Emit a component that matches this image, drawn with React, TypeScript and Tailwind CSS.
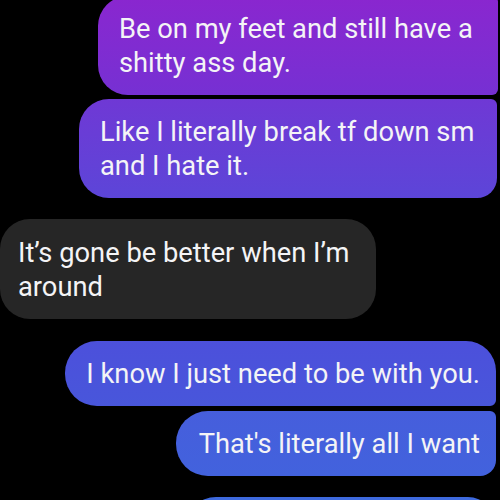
import React from "react";

export default function App() {
  const font = { fontFamily: "Roboto, 'Noto Sans', sans-serif" };
  return (
    <div
      className="w-[500px] h-[500px] overflow-hidden bg-black text-[#f4f4f6] text-[27.3px] leading-[34px]"
      style={font}
    >
      <div className="flex flex-col mt-[-4px]">
        <div className="self-end mr-[2px] w-[400px] rounded-l-[30px] rounded-tr-[6px] rounded-br-[6px] bg-gradient-to-b from-[#8a26cf] to-[#7630d3] pl-[21px] pr-[14px] pt-[15.5px] pb-[15px]">
          Be on my feet and still have a shitty ass day.
        </div>
        <div className="self-end mr-[3px] mt-[4.5px] w-[418px] rounded-l-[30px] rounded-tr-[6px] rounded-br-[20px] bg-gradient-to-b from-[#6f38d5] to-[#5c45d8] pl-[21px] pr-[12px] pt-[15.5px] pb-[15px]">
          Like I literally break tf down sm and I hate it.
        </div>
        <div className="self-start mt-[21.5px] w-[376px] rounded-[30px] bg-[#262626] pl-[18px] pr-[12px] pt-[17px] pb-[15px]">
          It’s gone be better when I’m around
        </div>
        <div className="self-end mr-[4px] mt-[22px] rounded-l-[32px] rounded-tr-[30px] rounded-br-[6px] bg-gradient-to-b from-[#4c50db] to-[#4856db] pl-[21px] pr-[16px] pt-[15.5px] pb-[15.5px] whitespace-nowrap">
          I know I just need to be with you.
        </div>
        <div className="self-end mr-[4px] mt-[5px] rounded-l-[32px] rounded-tr-[6px] rounded-br-[16px] bg-gradient-to-b from-[#465edc] to-[#4262dd] pl-[23px] pr-[16px] pt-[15.5px] pb-[15.5px] whitespace-nowrap">
          That's literally all I want
        </div>
        <div className="self-end mr-[4px] mt-[21px] w-[310px] h-[60px] rounded-l-[32px] rounded-tr-[30px] bg-[#3e6ade]" />
      </div>
    </div>
  );
}
